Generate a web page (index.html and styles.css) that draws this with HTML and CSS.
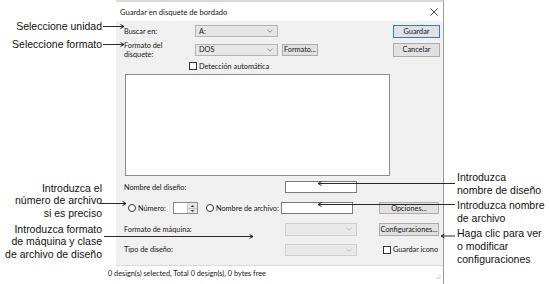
FILE: index.html
```html
<!DOCTYPE html>
<html lang="es">
<head>
<meta charset="utf-8">
<title>Guardar en disquete de bordado</title>
<link rel="stylesheet" href="styles.css">
</head>
<body>
<div class="stage">
  <div class="dialog">
    <div class="titlebar">
      <span class="title">Guardar en disquete de bordado</span>
      <svg class="close" width="8" height="8" viewBox="0 0 8 8"><path d="M0.5 0.5L7.5 7.5M7.5 0.5L0.5 7.5" stroke="#333" stroke-width="0.9" fill="none"/></svg>
    </div>
    <div class="body">
      <div class="row r1">
        <span class="lbl w71">Buscar en:</span>
        <div class="combo w83"><span>A:</span><svg class="chev" width="6" height="4" viewBox="0 0 6 4"><path d="M0.5 0.8L3 3.2L5.5 0.8" stroke="#777" stroke-width="0.8" fill="none"/></svg></div>
        <button class="btn default push">Guardar</button>
      </div>
      <div class="row r2">
        <span class="lbl w71 two">Formato del<br>disquete:</span>
        <div class="combo w83"><span>DOS</span><svg class="chev" width="6" height="4" viewBox="0 0 6 4"><path d="M0.5 0.8L3 3.2L5.5 0.8" stroke="#777" stroke-width="0.8" fill="none"/></svg></div>
        <button class="btn fmt">Formato...</button>
        <button class="btn push cancel">Cancelar</button>
      </div>
      <div class="row r3">
        <span class="check"></span><span class="cklbl">Detección automática</span>
      </div>
      <div class="listbox"></div>
      <div class="row r4">
        <span class="lbl w161">Nombre del diseño:</span>
        <div class="input w72"></div>
      </div>
      <div class="row r5">
        <span class="radgrp ga"><span class="radio"></span><span class="cklbl">Número:</span></span>
        <div class="spin"><span class="spinfield"></span><span class="spinbtns"><svg width="9" height="11" viewBox="0 0 9 11"><path d="M2.5 4L4.5 2L6.5 4Z" fill="#444"/><path d="M0 5.5H9" stroke="#bbb" stroke-width="0.8"/><path d="M2.5 7L4.5 9L6.5 7Z" fill="#444"/></svg></span></div>
        <span class="radgrp gb"><span class="radio"></span><span class="cklbl">Nombre de archivo:</span></span>
        <div class="input w72 h13"></div>
        <button class="btn push wide">Opciones...</button>
      </div>
      <div class="row r6">
        <span class="lbl w161">Formato de máquina:</span>
        <div class="combo disabled w72 h13"><span></span><svg class="chev" width="6" height="4" viewBox="0 0 6 4"><path d="M0.5 0.8L3 3.2L5.5 0.8" stroke="#aaa" stroke-width="0.8" fill="none"/></svg></div>
        <button class="btn push wide h13">Configuraciones...</button>
      </div>
      <div class="row r7">
        <span class="lbl w161">Tipo de diseño:</span>
        <div class="combo disabled w72"><span></span><svg class="chev" width="6" height="4" viewBox="0 0 6 4"><path d="M0.5 0.8L3 3.2L5.5 0.8" stroke="#aaa" stroke-width="0.8" fill="none"/></svg></div>
        <span class="check icon-ck"></span><span class="cklbl">Guardar icono</span>
      </div>
    </div>
    <div class="status">
      <span class="stext">0 design(s) selected, Total 0 design(s), 0 bytes free</span>
      <svg class="grip" width="5" height="5" viewBox="0 0 5 5"><rect x="3.5" y="0.5" width="1" height="1" fill="#bbb"/><rect x="1.5" y="2.5" width="1" height="1" fill="#bbb"/><rect x="3.5" y="2.5" width="1" height="1" fill="#bbb"/><rect x="-0.5" y="4" width="1" height="1" fill="#bbb"/><rect x="1.5" y="4" width="1" height="1" fill="#bbb"/><rect x="3.5" y="4" width="1" height="1" fill="#bbb"/></svg>
    </div>
  </div>

  <svg class="leaders" width="549" height="284" viewBox="0 0 549 284">
    <g stroke="#111" stroke-width="0.9" fill="none">
      <path d="M103 26.5H124M120.5 24.5L124 26.5L120.5 28.5"/>
      <path d="M103 44.5H124M120.5 42.5L124 44.5L120.5 46.5"/>
      <path d="M100 203.5H126M122.5 201.5L126 203.5L122.5 205.5"/>
      <path d="M104 236.5H253M249.5 234.5L253 236.5L249.5 238.5"/>
      <path d="M455 183.5H318M321.5 181.5L318 183.5L321.5 185.5"/>
      <path d="M455 204.5H318M321.5 202.5L318 204.5L321.5 206.5"/>
      <path d="M455 236H441M444.5 234L441 236L444.5 238"/>
    </g>
  </svg>

  <div class="callout left c1">Seleccione unidad</div>
  <div class="callout left c2">Seleccione formato</div>
  <div class="callout left c3">Introduzca el<br>número de archivo<br>si es preciso</div>
  <div class="callout left c4">Introduzca formato<br>de máquina y clase<br>de archivo de diseño</div>
  <div class="callout right c5">Introduzca<br>nombre de diseño</div>
  <div class="callout right c6">Introduzca nombre<br>de archivo</div>
  <div class="callout right c7">Haga clic para ver<br>o modificar<br>configuraciones</div>
</div>
</body>
</html>
```

FILE: styles.css
```css
html, body {
  margin: 0;
  padding: 0;
  background: #fff;
}

.stage {
  position: relative;
  width: 549px;
  height: 284px;
  overflow: hidden;
  background: #fff;
}

.dialog {
  margin-left: 116px;
  width: 328px;
  height: 284px;
  box-sizing: border-box;
  border-top: 2px solid #d8d8d8;
  border-right: 1px solid #9c9c9c;
  display: flex;
  flex-direction: column;
  font-family: Lato, "Open Sans", sans-serif;
  font-size: 7.3px;
  color: #151515;
}

.titlebar {
  height: 19px;
  flex: none;
  background: #fff;
  display: flex;
  align-items: center;
  justify-content: space-between;
  padding: 0 5px 0 4px;
}

.title {
  font-size: 7.6px;
}

.body {
  height: 244px;
  flex: none;
  box-sizing: border-box;
  background: #f0f0f0;
  padding: 3px 3px 0 8px;
}

.row {
  display: flex;
  align-items: center;
}

.r1 { height: 14px; }
.r2 { height: 15px; margin-top: 4px; }
.r3 { height: 10px; margin-top: 4px; padding-left: 65px; }
.r4 { height: 12px; margin-top: 5px; }
.r5 { height: 14px; margin-top: 8px; }
.r6 { height: 14px; margin-top: 7px; }
.r7 { height: 13px; margin-top: 7px; }

.lbl { flex: none; }
.w71 { width: 71px; }
.w161 { width: 161px; }
.two { line-height: 9px; }

.combo {
  box-sizing: border-box;
  height: 12px;
  background: #e6e6e6;
  border: 1px solid #b4b4b4;
  display: flex;
  align-items: center;
  justify-content: space-between;
  padding: 0 4px 0 3px;
  flex: none;
}

.combo.disabled {
  background: #e9e9e9;
  border-color: #cfcfcf;
}

.w83 { width: 83px; }
.w72 { width: 72px; }
.h13 { height: 13px; }

.btn {
  box-sizing: border-box;
  flex: none;
  height: 13px;
  width: 47px;
  padding: 0;
  margin: 0;
  font: inherit;
  color: #151515;
  background: #e1e1e1;
  border: 1px solid #adadad;
  display: flex;
  align-items: center;
  justify-content: center;
}

.btn.default {
  border-color: #2a7fd0;
}

.push { margin-left: auto; }
.cancel { height: 14px; }
.fmt { width: 36px; height: 12px; margin-left: 4px; }
.wide { width: 60px; height: 12px; margin-right: 1px; }
.wide.h13 { height: 13px; }

.check {
  box-sizing: border-box;
  width: 8px;
  height: 8px;
  border: 1px solid #333;
  background: #fff;
  flex: none;
}

.cklbl { margin-left: 2px; white-space: nowrap; }

.icon-ck { margin-left: 26px; }

.listbox {
  box-sizing: border-box;
  margin-top: 3px;
  margin-left: 1px;
  width: 265px;
  height: 102px;
  background: #fff;
  border: 1px solid #8c8c8c;
}

.input {
  box-sizing: border-box;
  height: 12px;
  background: #fff;
  border: 1px solid #7a7a7a;
  flex: none;
}

.radgrp {
  display: flex;
  align-items: center;
  flex: none;
}

.ga { width: 49px; padding-left: 4px; box-sizing: border-box; }
.gb { width: 75px; margin-left: 8px; }

.radio {
  box-sizing: border-box;
  width: 8px;
  height: 8px;
  border: 1px solid #333;
  border-radius: 50%;
  background: #fff;
  flex: none;
}

.spin {
  box-sizing: border-box;
  width: 25px;
  height: 12px;
  display: flex;
  border: 1px solid #8a8a8a;
  background: #fff;
  flex: none;
}

.spinfield { flex: 1; }

.spinbtns {
  width: 9px;
  background: #e8e8e8;
  border-left: 1px solid #c8c8c8;
  display: flex;
}

.status {
  flex: 1;
  position: relative;
  background: #fff;
  border-top: 1px solid #d9d9d9;
  line-height: 16px;
}

.stext {
  margin-left: -8px;
  white-space: nowrap;
}

.grip {
  position: absolute;
  right: 2px;
  bottom: 5px;
}

.leaders {
  position: absolute;
  left: 0;
  top: 0;
}

.callout {
  position: absolute;
  font-family: "Liberation Sans", Arial, sans-serif;
  font-size: 10.5px;
  line-height: 13px;
  color: #111;
  white-space: nowrap;
}

.callout.left {
  right: 447px;
  text-align: right;
}

.callout.right {
  left: 457px;
  text-align: left;
}

.c1 { top: 19.5px; }
.c2 { top: 37.5px; }
.c3 { top: 181.5px; line-height: 12.5px; }
.c4 { top: 222.5px; line-height: 12.5px; }
.c5 { top: 170.5px; }
.c6 { top: 198.5px; }
.c7 { top: 226.5px; }
```
